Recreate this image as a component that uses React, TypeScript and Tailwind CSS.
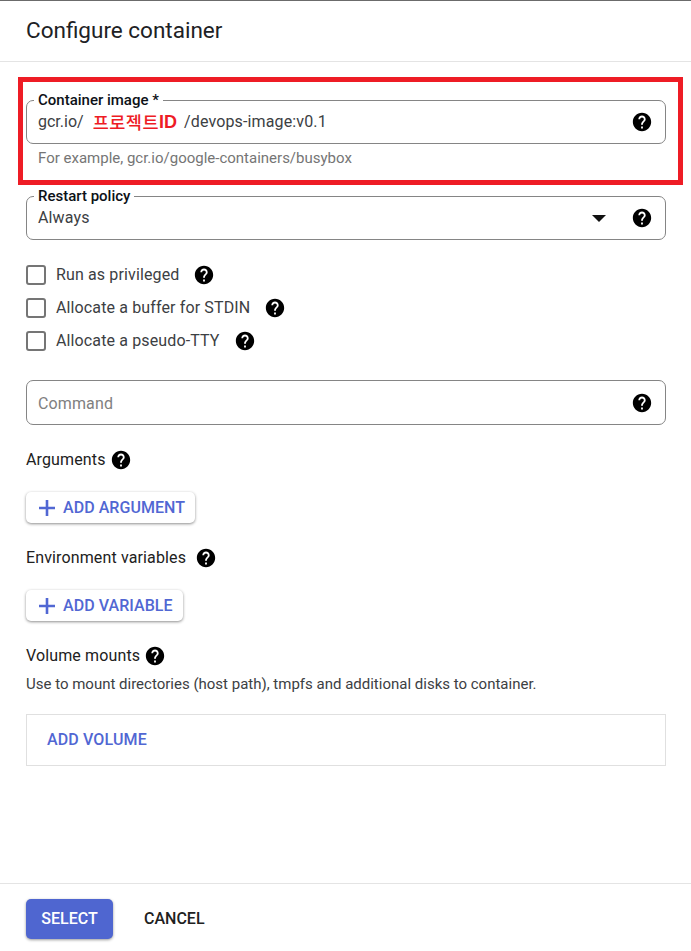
import React from "react";
import { MdHelp } from "react-icons/md";

const HelpIcon = ({ className = "" }: { className?: string }) => (
  <MdHelp size={22} className={`shrink-0 text-black ${className}`} />
);

const Field = ({
  label,
  children,
  className = "",
}: {
  label?: string;
  children: React.ReactNode;
  className?: string;
}) => (
  <div
    className={`relative flex items-center rounded-[7px] border border-[#858585] pl-[11px] pr-[12px] ${className}`}
  >
    {label && (
      <span className="absolute -top-[10px] left-[7px] bg-white px-[4px] text-[15px] leading-[18px] font-medium tracking-normal text-[#0d1117]">
        {label}
      </span>
    )}
    {children}
  </div>
);

const CheckRow = ({ label }: { label: string }) => (
  <div className="flex h-[33px] items-center">
    <span className="h-[20px] w-[20px] rounded-[3px] border-2 border-[#757575]" />
    <span className="ml-[10px] text-[16px] text-[#3c4043]">{label}</span>
    <HelpIcon className="ml-[14px]" />
  </div>
);

const AddButton = ({ label }: { label: string }) => (
  <button className="flex h-[31px] items-center rounded-[5px] bg-white pl-[11px] pr-[10px] text-[16px] font-medium tracking-[0.05px] text-[#5167d3] shadow-[0_1px_3px_rgba(0,0,0,0.45)]">
    <svg width="20" height="20" viewBox="0 0 20 20" className="mr-[6px]" fill="#5167d3">
      <path d="M8.700 2h2.600v6.700H18v2.600h-6.700V18H8.700v-6.700H2V8.700h6.700z" />
    </svg>
    {label}
  </button>
);

export default function App() {
  return (
    <div className="relative flex h-[951px] w-[691px] flex-col overflow-hidden border-t border-[#6b6b6b] bg-white font-['Roboto',sans-serif] tracking-[0.13px] text-[#212121]">
      <header className="flex h-[61px] shrink-0 items-center border-b border-[#e4e4e4] px-[26px]">
        <h1 className="text-[22.5px] font-normal tracking-normal text-[#202124]">Configure container</h1>
      </header>

      <main className="flex flex-1 flex-col pr-[25px] pl-[26px] pt-[38px]">
        <Field label="Container image *" className="h-[44px]">
          <span className="text-[16px] tracking-normal text-[#3c4043]">gcr.io/</span>
          <span className="ml-[9px] flex items-center font-['Noto_Sans_CJK_KR',sans-serif] text-[17.5px] font-medium tracking-[0.5px] text-[#ee1c25]">
            프로젝트
            <span className="font-['Liberation_Sans',sans-serif] text-[18px] font-bold tracking-normal">ID</span>
          </span>
          <span className="ml-[7px] text-[16px] text-[#3c4043]">/devops-image:v0.1</span>
          <HelpIcon className="ml-auto" />
        </Field>
        <p className="mt-[5px] ml-[12px] text-[15px] leading-[18px] tracking-normal text-[#757575]">
          For example, gcr.io/google-containers/busybox
        </p>

        <Field label="Restart policy" className="mt-[29px] h-[44px]">
          <span className="text-[16px] text-[#3c4043]">Always</span>
          <span className="mr-[25px] ml-auto h-0 w-0 border-x-[7px] border-t-[7px] border-x-transparent border-t-[#111111]" />
          <HelpIcon />
        </Field>

        <div className="mt-[18px] flex flex-col">
          <CheckRow label="Run as privileged" />
          <CheckRow label="Allocate a buffer for STDIN" />
          <CheckRow label="Allocate a pseudo-TTY" />
        </div>

        <Field className="mt-[23px] h-[45px]">
          <span className="pt-[2px] text-[16px] text-[#808080]">Command</span>
          <HelpIcon className="ml-auto" />
        </Field>

        <div className="mt-[24px] flex h-[22px] items-center gap-[4px] text-[16px]">
          Arguments
          <HelpIcon />
        </div>
        <div className="mt-[21px] flex">
          <AddButton label="ADD ARGUMENT" />
        </div>

        <div className="mt-[24px] flex h-[22px] items-center gap-[9px] text-[16px]">
          Environment variables
          <HelpIcon />
        </div>
        <div className="mt-[21px] flex">
          <AddButton label="ADD VARIABLE" />
        </div>

        <div className="mt-[24px] flex h-[22px] items-center gap-[4px] text-[16px]">
          Volume mounts
          <HelpIcon />
        </div>
        <p className="mt-[8px] text-[15px] leading-[18px] tracking-normal text-[#3c4043]">
          Use to mount directories (host path), tmpfs and additional disks to container.
        </p>

        <div className="mt-[21px] flex h-[52px] items-center border border-[#e0e0e0] pl-[20px]">
          <span className="text-[16px] font-medium text-[#5167d3]">ADD VOLUME</span>
        </div>
      </main>

      <footer className="flex h-[68px] shrink-0 items-start border-t border-[#e4e4e4] px-[26px] pt-[15px]">
        <button className="h-[40px] w-[87px] rounded-[5px] bg-[#4f66d0] text-[16px] font-medium tracking-normal text-white shadow-[0_1px_3px_rgba(0,0,0,0.4)]">
          SELECT
        </button>
        <button className="ml-[31px] h-[40px] text-[16px] font-medium tracking-normal text-[#212121]">CANCEL</button>
      </footer>

      {/* red annotation over the screenshot */}
      <div className="pointer-events-none absolute top-[76px] left-[18px] h-[108px] w-[665px] border-[5px] border-[#ee1c25]" />
    </div>
  );
}
